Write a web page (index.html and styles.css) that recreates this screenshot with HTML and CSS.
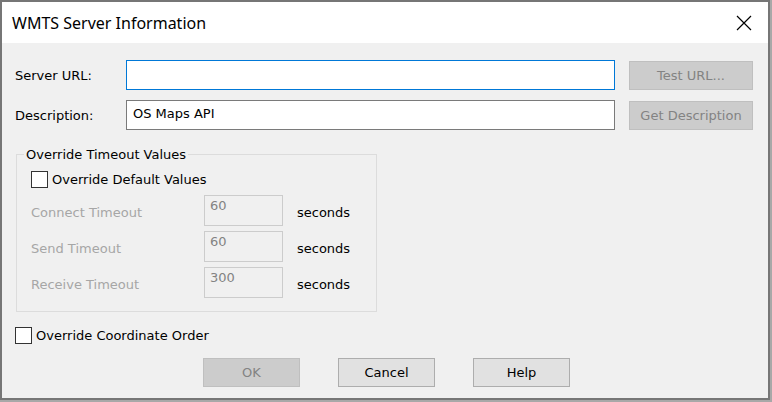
FILE: index.html
```html
<!DOCTYPE html>
<html lang="en">
<head>
    <meta charset="UTF-8">
    <title>WMTS Server Information</title>
    <link rel="stylesheet" href="styles.css">
</head>
<body>
    <div class="window">
        <div class="titlebar">
            <span class="title">WMTS Server Information</span>
            <svg class="close" width="16" height="16" viewBox="0 0 16 16">
                <path d="M1 1 L15 15 M15 1 L1 15" stroke="#000" stroke-width="1.2" fill="none"/>
            </svg>
        </div>

        <div class="content">
            <div class="field-row">
                <label class="field-label">Server URL:</label>
                <input type="text" class="text-box focused" value="">
                <button class="btn side-btn" disabled>Test URL...</button>
            </div>
            <div class="field-row">
                <label class="field-label">Description:</label>
                <input type="text" class="text-box" value="OS Maps API">
                <button class="btn side-btn" disabled>Get Description</button>
            </div>

            <fieldset class="group">
                <legend>Override Timeout Values</legend>
                <label class="check-row">
                    <input type="checkbox" class="check">
                    <span>Override Default Values</span>
                </label>
                <div class="timeout-row">
                    <span class="timeout-label">Connect Timeout</span>
                    <input type="text" class="num-box" value="60" disabled>
                    <span class="unit">seconds</span>
                </div>
                <div class="timeout-row">
                    <span class="timeout-label">Send Timeout</span>
                    <input type="text" class="num-box" value="60" disabled>
                    <span class="unit">seconds</span>
                </div>
                <div class="timeout-row">
                    <span class="timeout-label">Receive Timeout</span>
                    <input type="text" class="num-box" value="300" disabled>
                    <span class="unit">seconds</span>
                </div>
            </fieldset>

            <label class="check-row coord">
                <input type="checkbox" class="check">
                <span>Override Coordinate Order</span>
            </label>

            <div class="button-row">
                <button class="btn" disabled>OK</button>
                <button class="btn">Cancel</button>
                <button class="btn">Help</button>
            </div>
        </div>
    </div>
</body>
</html>
```

FILE: styles.css
```css
body {
    margin: 0;
    padding: 0;
    background-color: #a8a8a8;
    font-family: "DejaVu Sans", sans-serif;
    font-size: 13px;
    color: #000;
}
.window {
    box-sizing: border-box;
    width: 770px;
    height: 400px;
    border: 2px solid #767676;
    background-color: #f0f0f0;
}
.titlebar {
    height: 41px;
    background-color: #fff;
    display: flex;
    align-items: center;
    justify-content: space-between;
    padding: 0 16px 0 10px;
}
.title {
    font-family: "Noto Sans", sans-serif;
    font-size: 16px;
    color: #000;
}
.close {
    display: block;
}
.content {
    padding: 17px 0 0 13px;
}
.field-row {
    display: flex;
    align-items: center;
    height: 30px;
    margin-bottom: 10px;
}
.field-label {
    width: 111px;
}
.text-box {
    box-sizing: border-box;
    width: 489px;
    height: 30px;
    margin: 0 14px 0 0;
    padding: 0 6px 4px;
    border: 1px solid #7a7a7a;
    background-color: #fff;
    font-family: "DejaVu Sans", sans-serif;
    font-size: 13px;
    color: #000;
    outline: none;
}
.text-box.focused {
    border-color: #0078d7;
}
.btn {
    box-sizing: border-box;
    width: 97px;
    height: 29px;
    padding: 0;
    border: 1px solid #adadad;
    background-color: #e1e1e1;
    font-family: "DejaVu Sans", sans-serif;
    font-size: 13px;
    color: #000;
}
.btn:disabled {
    background-color: #cccccc;
    border-color: #bfbfbf;
    color: #838383;
}
.side-btn {
    width: 124px;
}
.group {
    width: 361px;
    box-sizing: border-box;
    margin: 17px 0 0 1px;
    padding: 9px 0 13px 14px;
    border: 1px solid #dcdcdc;
}
.group legend {
    padding: 0 2px;
    margin-left: -7px;
}
.check-row {
    display: flex;
    align-items: center;
    gap: 4px;
}
.check {
    appearance: none;
    width: 17px;
    height: 17px;
    margin: 0;
    border: 1px solid #333;
    background-color: #fff;
}
.timeout-row {
    display: flex;
    align-items: center;
    margin-top: 7px;
}
.timeout-row + .timeout-row {
    margin-top: 5px;
}
.timeout-label {
    width: 173px;
    padding-top: 4px;
    color: #a6a6a6;
}
.unit {
    padding-top: 4px;
}
.num-box {
    box-sizing: border-box;
    width: 79px;
    height: 31px;
    margin: 0 14px 0 0;
    padding: 0 5px 10px;
    border: 1px solid #cccccc;
    background-color: #f0f0f0;
    font-family: "DejaVu Sans", sans-serif;
    font-size: 13px;
    color: #838383;
}
.coord {
    margin: 15px 0 0 0;
}
.button-row {
    display: flex;
    justify-content: center;
    gap: 38px;
    margin: 14px 0 0 -10px;
}
```
